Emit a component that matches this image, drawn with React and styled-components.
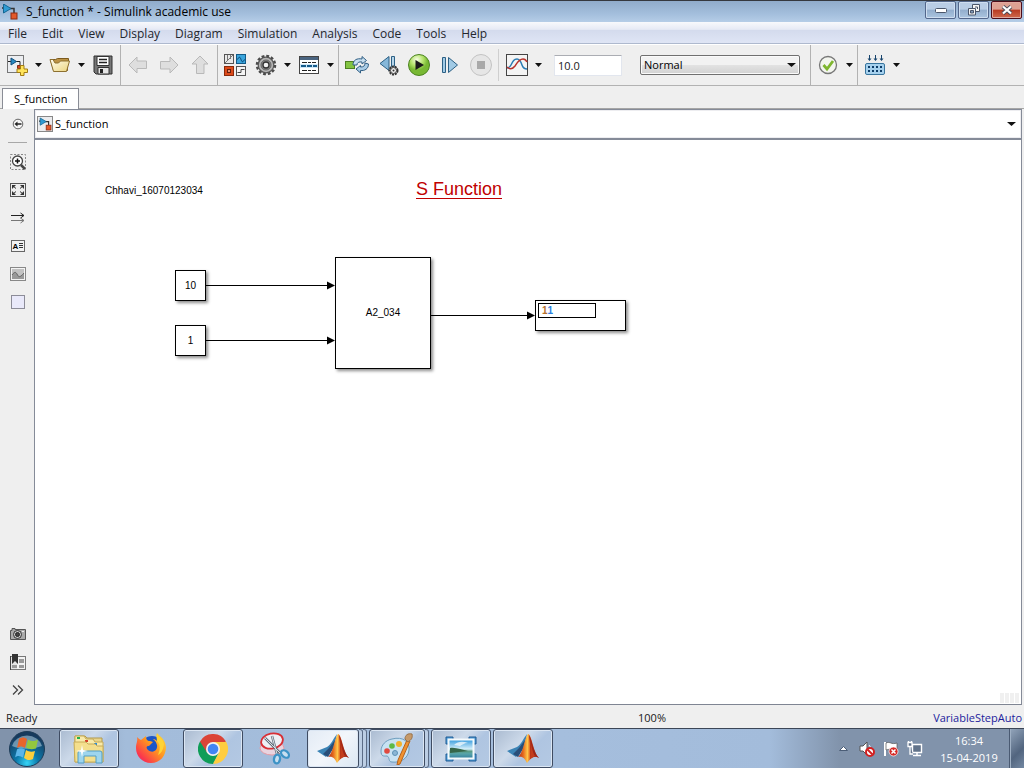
import React from "react";
import styled, { createGlobalStyle, css } from "styled-components";

const UI_FONT = '"Open Sans", "Noto Sans", sans-serif';
const BLOCK_FONT = '"Liberation Sans", Arial, sans-serif';

const GlobalStyle = createGlobalStyle`
  *, *::before, *::after { box-sizing: border-box; }
  body { margin: 0; font: 11px/16px ${UI_FONT}; color: #1a1a1a; }
  button, input, select { font: inherit; color: inherit; }
  button { border: 0; padding: 0; background: none; }
  svg { display: block; flex: none; }
`;

const Screen = styled.div`
  display: flex;
  flex-direction: column;
  height: 100vh;
  min-height: 480px;
  background: #efefef;
  overflow: hidden;
`;

const TitleBar = styled.header`
  display: flex;
  align-items: center;
  height: 22px;
  flex: none;
  padding: 0 2px;
  border-top: 1px solid #35383e;
  background: linear-gradient(#90abca, #a3bedc 60%, #b5cde7);
`;

const WindowTitle = styled.h1`
  flex: 1;
  margin: 0 0 0 8px;
  font: 12px/20px ${UI_FONT};
  color: #000;
  white-space: nowrap;
`;

const WindowButtons = styled.div`
  display: flex;
  align-self: flex-start;
  gap: 2px;
`;

const WindowButton = styled.button`
  display: grid;
  place-items: center;
  width: 31px;
  height: 18px;
  border: 1px solid ${(p) => (p.$close ? "#4c0d19" : "#53678b")};
  border-radius: 2px;
  box-shadow: inset 0 0 0 1px ${(p) => (p.$close ? "#e0a9a0" : "#cfdef0")};
  background: ${(p) =>
    p.$close
      ? "linear-gradient(#dda193 0 45%, #b83a22 50%, #cf6a4e)"
      : "linear-gradient(#b9cde5 0 45%, #93aecd 50%, #abc5e0)"};
`;

const MenuBar = styled.nav`
  display: flex;
  align-items: flex-end;
  height: 22px;
  flex: none;
  border-bottom: 1px solid #aeb9ce;
  background: linear-gradient(#f8f9fc 0, #e6eaf5 35%, #d4dbed 40%, #dfe5f5);
`;

const MenuButton = styled.button`
  padding: 0 7px 0 8px;
  font-size: 12px;
  line-height: 18px;
  color: #24272e;
`;

const Toolbar = styled.div`
  display: flex;
  height: 42px;
  flex: none;
  border-top: 1px solid #fff;
  border-bottom: 1px solid #b2b2b2;
`;

const ToolGroup = styled.div`
  display: flex;
  align-items: center;
  padding: 0 ${(p) => p.$right || 0}px 0 ${(p) => p.$left || 0}px;
  ${(p) =>
    !p.$last &&
    css`
      border-right: 1px solid #b2b2b2;
    `}
  ${(p) =>
    p.$short &&
    css`
      margin: 4px 0;
      border-color: #cfcfcf;
    `}
`;

const ToolButton = styled.button`
  display: grid;
  place-items: center;
  width: ${(p) => (p.$wide ? 31 : 24)}px;
  height: 28px;
`;

const ArrowButton = styled.button`
  display: grid;
  place-items: center;
  width: 15px;
  height: 28px;
  margin: 0 2px 0 ${(p) => (p.$tight ? -1 : 2)}px;
  &:last-child { margin-right: 0; }
`;

const StopTime = styled.input`
  width: 68px;
  height: 21px;
  margin: 0 18px 0 6px;
  padding: 0 3px;
  border: 1px solid #e2e6ee;
  border-top-color: #abadb3;
  border-radius: 1px;
  background: #fff;
  font-size: 11px;
`;

const SelectWrap = styled.span`
  display: grid;
  align-items: center;
  width: 160px;
  > * { grid-area: 1 / 1; }
  > svg { justify-self: end; margin-right: 4px; pointer-events: none; }
`;

const ModeSelect = styled.select`
  appearance: none;
  width: 100%;
  height: 20px;
  padding: 0 20px 0 3px;
  border: 1px solid #707070;
  border-radius: 2px;
  box-shadow: inset 0 0 0 1px #fafafa;
  background: linear-gradient(#f2f2f2 0 48%, #e2e2e2 52%, #d2d2d2);
  color: #000;
`;

const TabStrip = styled.div`
  display: flex;
  align-items: flex-end;
  height: 23px;
  flex: none;
  padding-left: 2px;
  box-shadow: inset 0 -1px #a6a6a6;
`;

const Tab = styled.button`
  height: 21px;
  padding: 0 11px;
  border: 1px solid #8a8d96;
  border-bottom: 0;
  background: #fff;
  color: #000;
`;

const Body = styled.div`
  display: flex;
  flex: 1;
  min-height: 0;
  padding-right: 2px;
`;

const Palette = styled.aside`
  display: flex;
  flex-direction: column;
  width: 34px;
  flex: none;
  padding: 1px 0;
`;

const PaletteButton = styled.button`
  display: grid;
  place-items: center;
  width: 100%;
  height: 28px;
  flex: none;
  padding-left: 2px;
`;

const PaletteRule = styled.hr`
  width: 19px;
  height: 1px;
  flex: none;
  margin: 4px 0 5px 8px;
  border: 0;
  background: #a8a8a8;
`;

const Spring = styled.span`
  flex: 1;
`;

const Workspace = styled.main`
  display: flex;
  flex-direction: column;
  flex: 1;
  min-width: 0;
  border: 1px solid #858b98;
  border-bottom-color: #7f8593;
`;

const PathBar = styled.div`
  display: flex;
  align-items: center;
  justify-content: space-between;
  height: 30px;
  flex: none;
  padding: 0 5px 0 2px;
  border-bottom: 2px solid #858b98;
  background: #fff;
  box-shadow: inset 0 0 0 1px #ededf0;
`;

const Crumb = styled.button`
  display: flex;
  align-items: center;
  gap: 2px;
  color: #000;
`;

const Canvas = styled.section`
  position: relative;
  flex: 1;
  min-height: 0;
  background: #fff;
  font-family: ${BLOCK_FONT};
  overflow: hidden;
`;

const Node = styled.div`
  position: absolute;
  left: ${(p) => p.$x}px;
  top: ${(p) => p.$y}px;
`;

const Block = styled(Node)`
  display: grid;
  place-items: center;
  width: ${(p) => p.$w}px;
  height: ${(p) => p.$h}px;
  border: 1px solid #000;
  background: #fff;
  box-shadow: 2px 2px 3px rgba(0, 0, 0, 0.45);
  font-size: 10px;
  line-height: 12px;
  color: #000;
`;

const DisplayBlock = styled(Block)`
  place-items: start;
  padding: 2px;
`;

const Readout = styled.output`
  width: 58px;
  height: 15px;
  padding: 0 3px;
  border: 1px solid #000;
  font-size: 10px;
  font-weight: 700;
  line-height: 13px;
  color: #b5702d;
  b { color: #2a80e0; }
`;

const Annotation = styled(Node)`
  font-size: 10px;
  line-height: 12px;
  color: #000;
  white-space: nowrap;
`;

const DiagramTitle = styled(Node).attrs({ as: "h2" })`
  margin: 0;
  border-bottom: 1px solid #c00000;
  font-size: 18px;
  font-weight: 400;
  line-height: 18px;
  color: #c00000;
  white-space: nowrap;
`;

const Wires = styled.svg`
  position: absolute;
  inset: 0;
`;

const SizeGrip = styled.span`
  position: absolute;
  right: 1px;
  bottom: 1px;
  width: 20px;
  height: 10px;
  background: repeating-linear-gradient(90deg, #f0f0f0 0 4px, #fff 4px 5px);
`;

const StatusBar = styled.footer`
  display: grid;
  grid-template-columns: 1fr auto 1fr;
  align-items: end;
  height: 23px;
  flex: none;
  padding: 0 2px 0 6px;
  line-height: 20px;
  > :nth-child(2) { margin-left: 276px; }
  > :last-child { justify-self: end; color: #1c1c9c; }
`;

const Taskbar = styled.footer`
  display: flex;
  height: 40px;
  flex: none;
  border-top: 1px solid #3c4657;
  background: linear-gradient(90deg, #8193ab 0 54px, #a3bcda 125px, #a5bedd 560px, #a3bcdb 770px, #8193ab 840px);
`;

const StartButton = styled.button`
  width: 59px;
  flex: none;
  padding-left: 8px;
`;

const TaskSlot = styled.button`
  display: flex;
  width: 62px;
  flex: none;
  padding-right: 2px;
`;

const TaskFace = styled.span`
  display: grid;
  place-items: center;
  flex: 1;
  height: 39px;
  ${(p) =>
    p.$open &&
    css`
      border: 1px solid #3f4c62;
      border-radius: 3px;
      box-shadow: inset 0 0 0 1px #dbe6f3;
      background: ${p.$active
        ? "linear-gradient(135deg, #e3ebf5, #f2f6fb 50%, #dbe7f3)"
        : "linear-gradient(135deg, #a9bad0, #cddaea 40%, #afc5e1 60%, #b4c9e3)"};
    `}
`;

const StackEdge = styled.span`
  width: 4px;
  height: 39px;
  border: 1px solid #5b6c86;
  border-left: 0;
  border-radius: 0 3px 3px 0;
  background: #bccee4;
`;

const Tray = styled.div`
  display: flex;
  align-items: center;
  margin-left: auto;
`;

const TrayButton = styled.button`
  display: grid;
  place-items: center;
  width: 24px;
  height: 39px;
`;

const Clock = styled.time`
  width: 82px;
  padding-left: 2px;
  text-align: center;
  line-height: 17px;
  color: #fff;
`;

const ShowDesktop = styled.button`
  width: 15px;
  align-self: stretch;
  border: 1px solid #4a5a72;
  border-width: 0 0 0 1px;
  box-shadow: inset 1px 0 #9fb0c4;
  background: linear-gradient(135deg, #93a5bb, #52657f 60%, #7388a2);
`;

const Caret = ({ w = 7 }) => (
  <svg width={w} height="4" viewBox="0 0 8 4" preserveAspectRatio="none"><path d="M0 0h8L4 4z" fill="#111" /></svg>
);

const ModelIcon = ({ framed }) => (
  <svg width="16" height="16" viewBox="0 0 16 16">
    {framed && <rect x=".5" y=".5" width="15" height="15" fill="#ececee" stroke="#888" />}
    <g transform={framed ? "translate(2 2) scale(.8)" : undefined}>
      <path d="M0 4h2M8 4.500h4v5" fill="none" stroke="#333" strokeWidth="1.500" />
      <path d="M1.500 0 9 4.500 1.500 9z" fill="#2f9bd3" stroke="#156793" />
      <rect x="9" y="9" width="6" height="6" fill="#e2592c" stroke="#8d2b10" />
    </g>
  </svg>
);

const NewIcon = () => (
  <svg width="22" height="22" viewBox="0 0 22 22">
    <rect x="1.500" y="1.500" width="16" height="17" fill="#eceef1" stroke="#777" />
    <path d="M2 7.500h9m-2 0h5v4" fill="none" stroke="#222" />
    <path d="M5 4 10.500 7.500 5 11z" fill="#2689c2" stroke="#144f7c" />
    <path d="M11.500 11.500h3v3h-3z" fill="#cf471e" stroke="#842a12" />
    <path d="M14.500 11.500h3.500v3.500h3.500v3.500H18V21.500h-3.500v-3H11V15h3.500z" fill="#ffe45b" stroke="#a37c13" />
  </svg>
);
const OpenIcon = () => (
  <svg width="22" height="20" viewBox="0 0 22 20">
    <path d="M1.500 4.500h5l2-1h11v3h-1v9h-14z" fill="#bc9345" stroke="#7c5a1d" />
    <path d="M1 4.500 4.500 16.500h13l3-10.500h-9l-2 2H6L4 4.500z" fill="url(#folder)" stroke="#8d7030" />
    <defs><linearGradient id="folder" x1="0" y1="0" x2="1" y2="1"><stop stopColor="#fffdf0" /><stop offset="1" stopColor="#ecd57e" /></linearGradient></defs>
  </svg>
);
const SaveIcon = () => (
  <svg width="20" height="20" viewBox="0 0 20 20">
    <path d="M1 1h18v18H3l-2-2z" fill="#777" stroke="#303030" />
    <path d="M4 1.500h12v9H4z" fill="#fff" stroke="#333" />
    <path d="M6 4.500h8M6 7.500h8" stroke="#222" strokeWidth="1.400" />
    <path d="M5 12.500h11v6.500H5z" fill="#e6e6e6" stroke="#333" /><path d="M7 14h3v4H7z" fill="#222" />
  </svg>
);
const NavArrow = ({ turn }) => (
  <svg width="20" height="20" viewBox="0 0 20 20">
    <path d="M1 10 9 2v4h9.500v7.500H9V18z" transform={`rotate(${turn} 10 10)`} fill="#dedede" stroke="#b9b9b9" />
  </svg>
);
const LibraryIcon = () => (
  <svg width="22" height="22" viewBox="0 0 22 22">
    <g stroke="#555"><rect x=".5" y=".5" width="9" height="9" fill="#e9e9e9" /><rect x="12.500" y=".5" width="9" height="9" fill="#3ba5dc" stroke="#125a87" />
    <rect x=".5" y="12.500" width="9" height="9" fill="#dc4a1a" stroke="#8a2a0b" /><rect x="12.500" y="12.500" width="9" height="9" fill="#f5f5f5" /></g>
    <path d="M3.500 1v6M6.500 1v4M1 9l8-8" fill="none" stroke="#777" />
    <path d="M13.500 5.500c1.500-3 2.500-3 3.500 0s2 3 3.500 0" fill="none" stroke="#063f6b" />
    <rect x="3.500" y="15.500" width="3" height="3" fill="#e98e6d" stroke="#60200f" />
    <path d="M13.500 18.500h3.500v-3h3.500" fill="none" stroke="#444" />
  </svg>
);
const Gear = ({ size = 22 }) => (
  <svg width={size} height={size} viewBox="0 0 22 22">
    <circle cx="11" cy="11" r="9" fill="none" stroke="#4a4a4a" strokeWidth="2.500" strokeDasharray="2.800 1.912" />
    <circle cx="11" cy="11" r="7.800" fill="#b5b5b5" stroke="#555" strokeWidth="1.200" />
    <circle cx="11" cy="11" r="5" fill="#8c8c8c" stroke="#666" />
    <circle cx="11" cy="11" r="3" fill="#f2f2f2" stroke="#333" strokeWidth="1.300" />
  </svg>
);
const ExplorerIcon = () => (
  <svg width="20" height="18" viewBox="0 0 20 18">
    <rect x=".5" y=".5" width="19" height="17" fill="#fff" stroke="#444" /><path d="M1 1h18v3H1z" fill="#4a6480" />
    <path d="M1 8h18v4H1z" fill="#cfe7f7" /><path d="M3 6.500h5m1 0h3m1 0h4M3 14.500h5m1 0h3m1 0h4" stroke="#222" />
    <path d="M2 10h16" stroke="#155b8b" strokeWidth="2" strokeDasharray="5 1" />
  </svg>
);
const RefreshIcon = () => (
  <svg width="26" height="20" viewBox="0 0 26 20">
    <rect x="1.500" y="6.500" width="9" height="7" fill="#83c441" stroke="#4e7f22" />
    <path d="M9 10c0-5 4-7 9-6V1.500l4.500 4L18 9V7c-3-.5-5 .5-5 3z" fill="#c6deef" stroke="#315f84" />
    <path d="M24.500 9c0 5-4 7-8 6.500V18L12 14l4.500-3.500V12c3 0 4.500-1 4.500-4z" fill="#a9cce6" stroke="#315f84" />
  </svg>
);
const StepBackIcon = () => (
  <svg width="24" height="22" viewBox="0 0 24 22">
    <path d="M13 2.500v14L4 9.500z" fill="#85b7d9" stroke="#2c6084" /><path d="M15.500 2.500h3v13h-3z" fill="#b5d5ea" stroke="#2c6084" />
    <circle cx="17.500" cy="16.500" r="4" fill="#ddd" stroke="#333" strokeWidth="2" strokeDasharray="2 .8" /><circle cx="17.500" cy="16.500" r="3" fill="#eee" stroke="#444" /><circle cx="17.500" cy="16.500" r="1" fill="#333" />
  </svg>
);
const RunIcon = () => (
  <svg width="24" height="24" viewBox="0 0 24 24">
    <defs><radialGradient id="run" cx=".4" cy=".25"><stop stopColor="#f7fde6" /><stop offset=".6" stopColor="#b4e36b" /><stop offset="1" stopColor="#78b833" /></radialGradient></defs>
    <circle cx="12" cy="12" r="10.500" fill="url(#run)" stroke="#4c8420" /><path d="M8.500 7v10l8.500-5z" fill="#1a1a1a" />
  </svg>
);
const StepIcon = () => (
  <svg width="18" height="18" viewBox="0 0 18 18">
    <path d="M1.500 1.500h3v15h-3zM7.500 1.500v15l9-7.500z" fill="#a1cae5" stroke="#2c6084" />
  </svg>
);
const StopIcon = () => (
  <svg width="24" height="24" viewBox="0 0 24 24">
    <circle cx="12" cy="12" r="10.500" fill="#e6e6e6" stroke="#c3c3c3" /><path d="M8 8h8v8H8z" fill="#a9a9a9" />
  </svg>
);
const ScopeIcon = () => (
  <svg width="22" height="22" viewBox="0 0 22 22">
    <rect x=".5" y=".5" width="21" height="21" fill="#f4f4f4" stroke="#444" />
    <path d="M1 14c2 0 3-1 4-3 2-4 3-6 6-6s4 3 5 6 2 4 5 4" fill="none" stroke="#2b7cb3" strokeWidth="1.500" />
    <path d="M1 13c2 2 5 3 8-1 2-3 4-7 8-7 2 0 3 1 4 3" fill="none" stroke="#b8332c" strokeWidth="1.500" />
  </svg>
);
const CheckIcon = () => (
  <svg width="20" height="20" viewBox="0 0 20 20">
    <circle cx="10" cy="10" r="8.500" fill="#f3f5ef" stroke="#777" strokeWidth="1.300" />
    <path d="m5.500 10 3.500 4 6-8" fill="none" stroke="#7fb62f" strokeWidth="2.800" />
  </svg>
);
const BuildIcon = () => (
  <svg width="22" height="22" viewBox="0 0 22 22">
    <path d="M5.500 1v5M11.500 1v5M17.500 1v5" stroke="#17446d" />
    <path d="M3.500 4.500h4l-2 2.500zM9.500 4.500h4l-2 2.500zM15.500 4.500h4l-2 2.500z" fill="#17446d" />
    <rect x="1.500" y="9.500" width="19" height="11" rx="1.500" fill="#a6d1ee" stroke="#38759e" />
    <path d="M4 13h15M4 17h15" stroke="#0c3c68" strokeWidth="2" strokeDasharray="2 2" />
  </svg>
);

const HideIcon = () => (
  <svg width="12" height="12" viewBox="0 0 12 12"><circle cx="6" cy="6" r="4.800" fill="#f5f5f5" stroke="#666" /><path d="M9.500 6H4" stroke="#222" strokeWidth="1.500" /><path d="M5.500 3.500v5L2.500 6z" fill="#222" /></svg>
);
const ZoomIcon = () => (
  <svg width="16" height="16" viewBox="0 0 16 16">
    <rect x=".5" y=".5" width="15" height="15" fill="none" stroke="#888" strokeDasharray="2 1.500" />
    <circle cx="7.500" cy="7" r="5" fill="#fff" stroke="#444" strokeWidth="1.300" /><path d="M5 7h5M7.500 4.500v5" stroke="#111" strokeWidth="1.500" /><path d="m11 11 4 4" stroke="#444" strokeWidth="2.500" />
  </svg>
);
const FitIcon = () => (
  <svg width="16" height="14" viewBox="0 0 16 14">
    <rect x=".5" y=".5" width="15" height="13" fill="#eee" stroke="#555" />
    <path d="M2 2h4L2 6zM14 2h-4l4 4zM2 12h4L2 8zM14 12h-4l4-4z" fill="#333" /><path d="m3 3 3 2.500M13 3l-3 2.500M3 11l3-2.500M13 11l-3-2.500" stroke="#333" />
  </svg>
);
const SignalIcon = () => (
  <svg width="16" height="12" viewBox="0 0 16 12"><path d="M1 3.500h13M10.500 1 14 3.500 10.500 6" fill="none" stroke="#222" /><path d="M1 8.500h13M10.500 6 14 8.500 10.500 11" fill="none" stroke="#777" /></svg>
);
const TextIcon = () => (
  <svg width="14" height="12" viewBox="0 0 14 12">
    <rect x=".5" y=".5" width="13" height="11" fill="#f2f2f2" stroke="#666" />
    <text x="1.500" y="9" fontFamily="Liberation Sans, sans-serif" fontWeight="700" fontSize="8">A</text><path d="M8 3.500h4M8 5.500h4M8 7.500h4" stroke="#333" />
  </svg>
);
const ImageIcon = () => (
  <svg width="16" height="14" viewBox="0 0 16 14"><rect x=".5" y=".5" width="15" height="13" fill="#f4f4f4" stroke="#888" /><path d="M2 2h12v10H2z" fill="#c2c2c2" /><path d="M2 8c3-4 4-3 5.500 0S11 9.500 14 6v6H2z" fill="#999" /><path d="M2 8c3-4 4-3 5.500 0S11 9.500 14 6" fill="none" stroke="#666" /></svg>
);
const AreaIcon = () => (
  <svg width="14" height="14" viewBox="0 0 14 14"><rect x=".5" y=".5" width="13" height="13" fill="#e9e9fa" stroke="#8c8c98" /></svg>
);
const CameraIcon = () => (
  <svg width="16" height="12" viewBox="0 0 16 12"><path d="M2 .500h3v1h10.500v10H.500v-9H2z" fill="#aaa" stroke="#555" /><circle cx="7.500" cy="6.500" r="4" fill="#ccc" stroke="#333" /><circle cx="7.500" cy="6.500" r="2" fill="#444" stroke="#222" /><path d="M12 3.500h2" stroke="#eee" /></svg>
);
const BrowserIcon = () => (
  <svg width="16" height="16" viewBox="0 0 16 16"><rect x=".5" y="2.500" width="15" height="13" fill="#f2f2f2" stroke="#777" /><path d="M1 3h6v12H1z" fill="#e4e4e4" /><path d="M9 5h5v4H9zM9 11h5v3H9zM2 11h5v3H2z" fill="#999" /><path d="M2 0h6v10L5 7l-3 3z" fill="#333" /><path d="M.500 2v14" stroke="#444" /></svg>
);
const MoreIcon = () => (
  <svg width="12" height="10" viewBox="0 0 12 10"><path d="m1 .500 4.500 4.500L1 9.500M6 .500 10.500 5 6 9.500" fill="none" stroke="#444" strokeWidth="1.300" /></svg>
);

const StartOrb = () => (
  <svg width="38" height="38" viewBox="0 0 38 38">
    <defs><radialGradient id="orb" cx=".5" cy=".9" r=".8"><stop stopColor="#35d4f7" /><stop offset=".4" stopColor="#0b78a9" /><stop offset="1" stopColor="#173a5d" /></radialGradient></defs>
    <circle cx="19" cy="19" r="17.500" fill="url(#orb)" stroke="#1d3b57" /><path d="M4 16a15.500 14 0 0 1 30 0c-8 3-21 4-30 0z" fill="#c3dbea" opacity=".5" />
    <path d="M11 9c3-2 5-2 8 0l-2 9c-3-2-5-2-8 0z" fill="#e8652b" /><path d="M20 9.500c3 2 6 2 10 0l-2 9c-4 1-7 1-10-1z" fill="#93c83e" />
    <path d="M9 19.500c3-2 5-1 8 0l-2 8c-3-2-6-2-8 0z" fill="#5bb5e8" /><path d="M18 20c3 2 6 2 9 1l-2 8c-4 2-6 1-9-1z" fill="#fdcf3c" />
  </svg>
);
const FolderIcon = () => (
  <svg width="34" height="32" viewBox="0 0 34 32">
    <path d="M3 3h10l2 2h15v20H3z" fill="#e9d58c" stroke="#b39a4c" /><path d="M3 8V3h9l2 3h7l2 3h8v20H3z" fill="#f9eaa9" stroke="#c5aa58" />
    <path d="M5 4h3v2H5z" fill="#22b14c" /><path d="M13 7h3v2h-3z" fill="#d6402b" /><path d="M22 10h3v2h-3z" fill="#2f8fd6" /><path d="M2 9h12l2 2h7l2 2h6v16H3z" fill="#f4df8d" stroke="#c7ac58" />
    <path d="M6 30V20q0-2 2-2h20q2 0 2 2v10h-6v-7H12v7z" fill="#9ed5ee" stroke="#529dc4" /><path d="M10 12l1 5 5 1-5 1-1 5-1-5-5-1 5-1z" fill="#fff" />
  </svg>
);
const FirefoxIcon = () => (
  <svg width="32" height="32" viewBox="0 0 32 32">
    <defs><linearGradient id="fox" x1="1" y1="0" x2="0" y2="1"><stop stopColor="#ffe63c" /><stop offset=".45" stopColor="#ff9421" /><stop offset=".8" stopColor="#fb384c" /><stop offset="1" stopColor="#d81d87" /></linearGradient></defs>
    <circle cx="17" cy="14" r="11" fill="#1c55c7" /><path d="M2 4c1 1 2 2 4 3l5-4c0 3 1 5 4 5l3 1-4 4c-3 0-3 2-1 4 5 4 10 0 9-5-1-4-3-5-4-6 2 0 3 1 4 2 0-4-1-6 0-8 2 3 8 5 9 14 0 9-6 16-15 16S1 23 1 15C1 10 3 8 2 4z" fill="url(#fox)" /><path d="M22 8c0-4-1-5 0-7 2 3 6 5 7 10-1 7-3 9-6 11 2-5 3-10-1-14z" fill="#ffd335" />
  </svg>
);
const ChromeIcon = () => (
  <svg width="30" height="30" viewBox="0 0 30 30">
    <path d="M15 15 2 7.500A15 15 0 0 1 28 7.500z" fill="#db4437" /><path d="M15 15v15A15 15 0 0 1 2 7.500z" fill="#0f9d58" /><path d="M15 15l13-7.500A15 15 0 0 1 15 30l6-11z" fill="#ffcd40" />
    <path d="M15 8h13.200l-7.200 10z" fill="#ffcd40" /><path d="M2 7.500 9 18.500 15 8z" fill="#db4437" /><path d="M9 18.500 15 30l6-11.500z" fill="#0f9d58" /><path d="m15 30 6-11.500V15l7 1z" fill="#ffcd40" />
    <circle cx="15" cy="15" r="7" fill="#f1f1f1" /><circle cx="15" cy="15" r="5.300" fill="#4285f4" />
  </svg>
);
const SnipIcon = () => (
  <svg width="32" height="34" viewBox="0 0 32 34">
    <ellipse cx="13" cy="16" rx="12" ry="7" fill="#e9d4df" stroke="#e39aa4" /><ellipse cx="13" cy="9" rx="11" ry="7.500" transform="rotate(-12 13 9)" fill="#edf0f5" stroke="#d82f35" strokeWidth="1.800" />
    <path d="m6 6 15 15M13 4l5 18" stroke="#65717c" strokeWidth="2.500" /><path d="m6 6 15 15M13 4l5 18" stroke="#d8dfe5" />
    <ellipse cx="18" cy="27" rx="3" ry="4.500" transform="rotate(10 18 27)" fill="#c8dff0" stroke="#3d93c6" strokeWidth="2.300" /><ellipse cx="26" cy="22" rx="3" ry="4.500" transform="rotate(-50 26 22)" fill="#c8dff0" stroke="#3d93c6" strokeWidth="2.300" />
  </svg>
);
const MatlabIcon = () => (
  <svg width="34" height="32" viewBox="0 0 34 32">
    <defs><linearGradient id="peak" x1="0" x2="1"><stop stopColor="#a92718" /><stop offset=".25" stopColor="#e66a1c" /><stop offset=".45" stopColor="#ffc64a" /><stop offset=".6" stopColor="#d84a18" /><stop offset="1" stopColor="#8d1d16" /></linearGradient></defs>
    <path d="M1 18 11 14c4-2 6-8 10-13l-3 13-8 10z" fill="#3b83b5" /><path d="m7 21 6-6 6-8-2 9-5 8z" fill="#294e79" />
    <path d="M22 1c4 1 5 18 11 24-5-3-8 0-12 5-2-4-4-7-9-6 5-3 7-20 10-23z" fill="url(#peak)" /><path d="M23 2c3 4 4 18 10 23-5-3-7-1-9 1 1-9 0-17-1-24z" fill="#9c2618" /><path d="M23 2c2 7 2 16 1 24l5-3c-3-4-4-15-6-21z" fill="#c43c1b" />
  </svg>
);
const PaintIcon = () => (
  <svg width="34" height="32" viewBox="0 0 34 32">
    <path d="M12 6c11-3 18 3 17 11-1 9-9 13-17 12-4 0-2-5-5-6-3 0-6 1-6-5C1 12 6 7 12 6z" fill="#c8e2f2" stroke="#6d9dbd" />
    <circle cx="7" cy="18" r="2.800" fill="#e04a40" /><circle cx="12" cy="13" r="2.800" fill="#5db946" /><circle cx="19" cy="11" r="3" fill="#f1b22e" /><circle cx="15" cy="20" r="2.500" fill="#8bb7d5" stroke="#5d92b6" />
    <path d="m27 7 3 1-10 23-3 1 1-5z" fill="#ef9230" stroke="#b4621d" /><path d="M25 6c0-4 3-6 7-5 1 4-1 6-4 8z" fill="#c69a6a" stroke="#98724a" />
  </svg>
);
const PictureIcon = () => (
  <svg width="32" height="28" viewBox="0 0 32 28">
    <defs><linearGradient id="sky" x2="0" y2="1"><stop stopColor="#3299dd" /><stop offset=".5" stopColor="#d5effa" /><stop offset=".62" stopColor="#5a9b85" /><stop offset=".75" stopColor="#57a4aa" /><stop offset="1" stopColor="#347d9e" /></linearGradient></defs>
    <path d="M1 2h7v7H1zM24 2h7v7h-7zM1 19h7v7H1zM24 19h7v7h-7z" fill="#4a9ad6" stroke="#1f5b93" /><rect x="3.500" y="4.500" width="25" height="19" fill="url(#sky)" stroke="#f5fafc" strokeWidth="2" />
    <path d="M5 13c6-1 12 2 18 3l-18 2z" fill="#36664a" /><path d="M9 10c4-4 9-4 14-2-4 0-6 2-8 3z" fill="#fff" opacity=".7" />
  </svg>
);

const TrayUp = () => <svg width="9" height="5" viewBox="0 0 9 5"><path d="M.500 4.500 4.500.500l4 4z" fill="#fff" stroke="#4b5d76" /></svg>;
const SpeakerIcon = () => (
  <svg width="18" height="16" viewBox="0 0 18 16"><path d="M2 5h3l4-4v13l-4-4H2z" fill="#fff" stroke="#555" /><path d="M11 4c2 2 2 5 0 7" fill="none" stroke="#fff" /><circle cx="12" cy="11" r="4" fill="#fff" stroke="#d21f1f" strokeWidth="2" /><path d="m9.500 8.500 5 5" stroke="#d21f1f" strokeWidth="2" /></svg>
);
const FlagIcon = () => (
  <svg width="18" height="16" viewBox="0 0 18 16"><path d="M3 1v14" stroke="#fff" strokeWidth="2" /><path d="M4 2c4-2 5 2 11 0v7c-5 2-7-2-11 0z" fill="#fff" stroke="#555" strokeWidth=".7" /><circle cx="11.500" cy="10.500" r="4.500" fill="#d62a26" stroke="#fff" strokeWidth=".7" /><path d="m9.500 8.500 4 4m0-4-4 4" stroke="#fff" strokeWidth="1.500" /></svg>
);
const NetworkIcon = () => (
  <svg width="18" height="16" viewBox="0 0 18 16"><path d="M6.500 3.500h9v8h-9z" fill="#62738a" stroke="#fff" strokeWidth="1.400" /><path d="M11 12v2M7 14.500h8" stroke="#fff" strokeWidth="1.500" /><path d="M2 1.500h4v4H2zM4 5v8h3M2.500 0v2M5.500 0v2" fill="#65758c" stroke="#fff" strokeWidth="1.300" /></svg>
);

const MENUS = ["File", "Edit", "View", "Display", "Diagram", "Simulation", "Analysis", "Code", "Tools", "Help"];

const PALETTE_TOP = [
  ["Zoom", ZoomIcon],
  ["Fit to view", FitIcon],
  ["Sample time", SignalIcon],
  ["Annotation", TextIcon],
  ["Image", ImageIcon],
  ["Area", AreaIcon],
];
const PALETTE_BOTTOM = [
  ["Screenshot", CameraIcon],
  ["Model browser", BrowserIcon],
  ["More", MoreIcon],
];

const TASKS = [
  { label: "Explorer", Icon: FolderIcon, open: true },
  { label: "Firefox", Icon: FirefoxIcon },
  { label: "Chrome", Icon: ChromeIcon, open: true },
  { label: "Snipping Tool", Icon: SnipIcon },
  { label: "MATLAB", Icon: MatlabIcon, open: true, active: true, stack: 2 },
  { label: "Paint", Icon: PaintIcon, open: true, stack: 1 },
  { label: "Photo Viewer", Icon: PictureIcon, open: true },
  { label: "MATLAB Installer", Icon: MatlabIcon, open: true },
];

const Tool = ({ label, wide, children }) => (
  <ToolButton aria-label={label} $wide={wide}>{children}</ToolButton>
);
const Drop = ({ label, tight }) => (
  <ArrowButton aria-label={label} $tight={tight}><Caret /></ArrowButton>
);

export default function App() {
  return (
    <Screen>
      <GlobalStyle />
      <TitleBar>
        <ModelIcon />
        <WindowTitle>S_function * - Simulink academic use</WindowTitle>
        <WindowButtons>
          <WindowButton aria-label="Minimize">
            <svg width="12" height="6" viewBox="0 0 12 6"><rect x=".5" y="1.500" width="11" height="4" rx="1" fill="#fff" stroke="#4a566b" /></svg>
          </WindowButton>
          <WindowButton aria-label="Restore">
            <svg width="12" height="12" viewBox="0 0 12 12">
              <path d="M4.500.500h7v7h-7z" fill="#f5f5f5" stroke="#4a566b" /><path d="M7 3h2.500v2" fill="none" stroke="#4a566b" />
              <path d="M.500 4.500h7v6.500h-7z" fill="#f5f5f5" stroke="#4a566b" /><path d="M2.500 6.500h3V9h-3z" fill="#7f99b9" stroke="#4a566b" />
            </svg>
          </WindowButton>
          <WindowButton aria-label="Close" $close>
            <svg width="12" height="10" viewBox="0 0 12 10"><path d="m2 1.500 8 7m0-7-8 7" stroke="#4a4d5a" strokeWidth="4" /><path d="m2 1.500 8 7m0-7-8 7" stroke="#fff" strokeWidth="2.300" /></svg>
          </WindowButton>
        </WindowButtons>
      </TitleBar>

      <MenuBar>
        {MENUS.map((name) => <MenuButton key={name}>{name}</MenuButton>)}
      </MenuBar>

      <Toolbar>
        <ToolGroup $left={5} $right={5}>
          <Tool label="New"><NewIcon /></Tool>
          <Drop label="New options" />
          <Tool label="Open"><OpenIcon /></Tool>
          <Drop label="Open options" />
          <Tool label="Save"><SaveIcon /></Tool>
        </ToolGroup>
        <ToolGroup $left={1} $right={2}>
          <Tool label="Back" wide><NavArrow turn={0} /></Tool>
          <Tool label="Forward" wide><NavArrow turn={180} /></Tool>
          <Tool label="Up" wide><NavArrow turn={90} /></Tool>
        </ToolGroup>
        <ToolGroup $left={1}>
          <Tool label="Library browser" wide><LibraryIcon /></Tool>
          <Tool label="Model configuration" wide><Gear /></Tool>
          <Drop label="Configuration options" tight />
          <Tool label="Model explorer"><ExplorerIcon /></Tool>
          <Drop label="Explorer options" />
        </ToolGroup>
        <ToolGroup $left={2} $right={2} $short>
          <Tool label="Fast restart" wide><RefreshIcon /></Tool>
          <Tool label="Step back" wide><StepBackIcon /></Tool>
          <Tool label="Run" wide><RunIcon /></Tool>
          <Tool label="Step forward" wide><StepIcon /></Tool>
          <Tool label="Stop" wide><StopIcon /></Tool>
        </ToolGroup>
        <ToolGroup $left={6} $right={10}>
          <Tool label="Data inspector"><ScopeIcon /></Tool>
          <Drop label="Inspector options" />
          <StopTime aria-label="Stop time" defaultValue="10.0" />
          <SelectWrap>
            <ModeSelect aria-label="Simulation mode" defaultValue="Normal">
              <option>Normal</option>
              <option>Accelerator</option>
            </ModeSelect>
            <Caret w={9} />
          </SelectWrap>
        </ToolGroup>
        <ToolGroup $left={5}>
          <Tool label="Model advisor"><CheckIcon /></Tool>
          <Drop label="Advisor options" />
        </ToolGroup>
        <ToolGroup $left={5} $last>
          <Tool label="Build"><BuildIcon /></Tool>
          <Drop label="Build options" />
        </ToolGroup>
      </Toolbar>

      <TabStrip><Tab>S_function</Tab></TabStrip>

      <Body>
        <Palette>
          <PaletteButton aria-label="Hide browser"><HideIcon /></PaletteButton>
          <PaletteRule />
          {PALETTE_TOP.map(([label, Icon]) => <PaletteButton key={label} aria-label={label}><Icon /></PaletteButton>)}
          <Spring />
          {PALETTE_BOTTOM.map(([label, Icon]) => <PaletteButton key={label} aria-label={label}><Icon /></PaletteButton>)}
        </Palette>
        <Workspace>
          <PathBar>
            <Crumb><ModelIcon framed />S_function</Crumb>
            <button aria-label="Model path history"><Caret w={9} /></button>
          </PathBar>
          <Canvas>
            <Wires width="600" height="240" viewBox="0 0 600 240">
              <path d="M171 145.500h124M171 200.500h124M396 175.500h99" stroke="#000" />
              <path d="M292 141.500v8l8-4zM292 196.500v8l8-4zM492 171.500v8l8-4z" />
            </Wires>
            <Annotation $x={70} $y={45}>Chhavi_16070123034</Annotation>
            <DiagramTitle $x={381} $y={40}>S Function</DiagramTitle>
            <Block $x={140} $y={130} $w={31} $h={31}>10</Block>
            <Block $x={140} $y={185} $w={31} $h={31}>1</Block>
            <Block $x={300} $y={117} $w={96} $h={112}>A2_034</Block>
            <DisplayBlock $x={500} $y={160} $w={91} $h={31}>
              <Readout>1<b>1</b></Readout>
            </DisplayBlock>
            <SizeGrip />
          </Canvas>
        </Workspace>
      </Body>

      <StatusBar>
        <span>Ready</span>
        <span>100%</span>
        <span>VariableStepAuto</span>
      </StatusBar>

      <Taskbar>
        <StartButton aria-label="Start"><StartOrb /></StartButton>
        {TASKS.map(({ label, Icon, open, active, stack = 0 }) => (
          <TaskSlot key={label} aria-label={label}>
            <TaskFace $open={open} $active={active}><Icon /></TaskFace>
            {Array.from({ length: stack }, (_, i) => <StackEdge key={i} />)}
          </TaskSlot>
        ))}
        <Tray>
          <TrayButton aria-label="Show hidden icons"><TrayUp /></TrayButton>
          <TrayButton aria-label="Volume"><SpeakerIcon /></TrayButton>
          <TrayButton aria-label="Action center"><FlagIcon /></TrayButton>
          <TrayButton aria-label="Network"><NetworkIcon /></TrayButton>
          <Clock dateTime="2019-04-15T16:34">16:34<br />15-04-2019</Clock>
          <ShowDesktop aria-label="Show desktop" />
        </Tray>
      </Taskbar>
    </Screen>
  );
}
